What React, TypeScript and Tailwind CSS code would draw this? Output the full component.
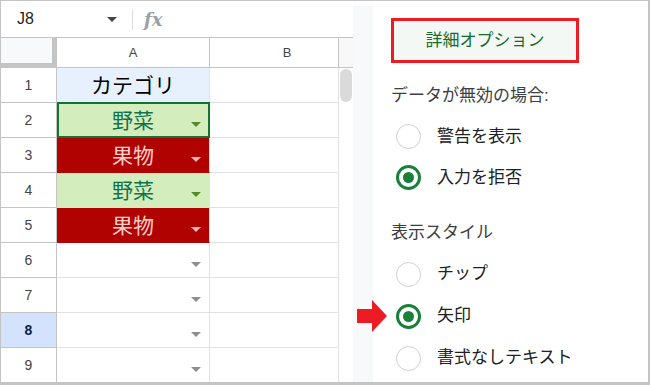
import React from "react";

type Kind = "head" | "veg" | "fruit" | "empty";

const rows: { n: number; kind: Kind; text?: string; selected?: boolean; active?: boolean }[] = [
  { n: 1, kind: "head", text: "カテゴリ" },
  { n: 2, kind: "veg", text: "野菜", selected: true },
  { n: 3, kind: "fruit", text: "果物" },
  { n: 4, kind: "veg", text: "野菜" },
  { n: 5, kind: "fruit", text: "果物" },
  { n: 6, kind: "empty" },
  { n: 7, kind: "empty" },
  { n: 8, kind: "empty", active: true },
  { n: 9, kind: "empty" },
];

const cellClass: Record<Kind, string> = {
  head: "bg-[#e7f0fd] text-black border-b-[#e7f0fd]",
  veg: "bg-[#d4edbc] text-[#11734b] border-b-[#d4edbc]",
  fruit: "bg-[#b10202] text-[#ffcfc9] border-b-[#b10202]",
  empty: "bg-white border-b-[#e1e1e1]",
};

const arrowColor: Record<Kind, string> = {
  head: "",
  veg: "#55892a",
  fruit: "#f2b4b2",
  empty: "#8e8e8e",
};

const Caret = ({ color }: { color: string }) => (
  <svg width="10" height="5" viewBox="0 0 10 5" className="absolute right-[8px] top-[19px]">
    <polygon points="0,0 10,0 5,5" fill={color} />
  </svg>
);

const Radio = ({ checked, label }: { checked?: boolean; label: string }) => (
  <div className="flex items-center">
    {checked ? (
      <span className="ml-[5px] flex h-[25px] w-[25px] items-center justify-center rounded-full border-[3px] border-[#188038]">
        <span className="h-[11px] w-[11px] rounded-full bg-[#188038]" />
      </span>
    ) : (
      <span className="ml-[5px] h-[25px] w-[25px] rounded-full border-[1.5px] border-[#cfcfcf]" />
    )}
    <span className="ml-[16px] text-[17px] leading-6 text-[#202124]">{label}</span>
  </div>
);

export default function App() {
  return (
    <div className="relative flex h-[385px] w-[650px] overflow-hidden border-t border-l border-r-2 border-b-[3px] border-[#c4c4c4] bg-white font-['Liberation_Sans','Noto_Sans_CJK_JP',sans-serif]">
      {/* スプレッドシート */}
      <div className="flex w-[352px] flex-col">
        <div className="flex h-[37px] shrink-0 items-center border-b border-[#c4c4c4]">
          <span className="ml-[16px] w-[90px] text-[16px] text-[#1f1f1f]">J8</span>
          <svg width="10" height="5" viewBox="0 0 10 5">
            <polygon points="0,0 10,0 5,5" fill="#444" />
          </svg>
          <span className="ml-[15px] h-[21px] w-px bg-[#dadce0]" />
          <span className="ml-[11px] font-['DejaVu_Serif',serif] text-[18px] font-bold italic text-[#9aa0a6]">fx</span>
        </div>
        <div className="flex flex-1">
          <div className="flex w-[338px] flex-col">
            <div className="flex h-[30px] shrink-0 text-[13px] text-[#444]">
              <div className="w-[56px] border-r-[5px] border-b-[5px] border-[#c4c4c4] bg-[#f8f9fa]" />
              <div className="flex w-[153px] items-center justify-center border-r border-b border-[#c4c4c4]">A</div>
              <div className="flex w-[129px] items-center justify-center border-r border-b border-[#c4c4c4] pl-[26px]">B</div>
            </div>
            {rows.map((r) => (
              <div key={r.n} className="flex h-[35px] shrink-0">
                <div
                  className={
                    r.active
                      ? "flex w-[56px] items-center justify-center border-r border-b border-[#c4c4c4] bg-[#d3e3fd] text-[14px] font-bold text-[#0b1f4a]"
                      : "flex w-[56px] items-center justify-center border-r border-b border-[#c4c4c4] text-[14px] text-[#444]"
                  }
                >
                  {r.n}
                </div>
                <div
                  className={`relative flex w-[153px] items-center justify-center border-r border-b border-r-[#e1e1e1] text-[21px] leading-none ${cellClass[r.kind]}`}
                >
                  {r.text}
                  {r.kind !== "head" && <Caret color={arrowColor[r.kind]} />}
                  {r.selected && (
                    <div className="absolute -top-px left-0 -right-px -bottom-px border-2 border-[#137333]" />
                  )}
                </div>
                <div className="w-[129px] border-r border-b border-[#e1e1e1]" />
              </div>
            ))}
          </div>
          <div className="flex w-[14px] flex-col">
            <div className="h-[30px] shrink-0 border-b border-[#c4c4c4] bg-[#f8f8f8]" />
            <div className="mt-px ml-px h-[33px] w-[12px] rounded-full bg-[#dadada]" />
          </div>
        </div>
      </div>

      <div className="w-[20px] border-t-4 border-white bg-[#f8f9fb]" />

      {/* 詳細オプション パネル */}
      <div className="flex flex-1 flex-col pt-[17px] pl-[18px]">
        <div className="flex h-[45px] w-[188px] items-center justify-center border-[3px] border-[#ed1c24] bg-[#f4f8f4] text-[17px] text-[#146c2e]">
          詳細オプション
        </div>
        <div className="mt-[13px] flex h-[40px] items-center text-[17px] text-[#3c4043]">データが無効の場合:</div>
        <div className="flex h-[41px] flex-col justify-center">
          <Radio label="警告を表示" />
        </div>
        <div className="flex h-[41px] flex-col justify-center">
          <Radio checked label="入力を拒否" />
        </div>
        <div className="mt-[15px] flex h-[40px] items-center text-[17px] text-[#3c4043]">表示スタイル</div>
        <div className="flex h-[42px] flex-col justify-center">
          <Radio label="チップ" />
        </div>
        <div className="flex h-[42px] flex-col justify-center">
          <Radio checked label="矢印" />
        </div>
        <div className="flex h-[42px] flex-col justify-center">
          <Radio label="書式なしテキスト" />
        </div>
      </div>

      {/* 注目矢印 */}
      <svg width="30" height="32" viewBox="0 0 30 32" className="absolute left-[356px] top-[299px]">
        <polygon points="0,9 15,9 15,0 30,16 15,32 15,23 0,23" fill="#ed1c24" />
      </svg>
    </div>
  );
}
